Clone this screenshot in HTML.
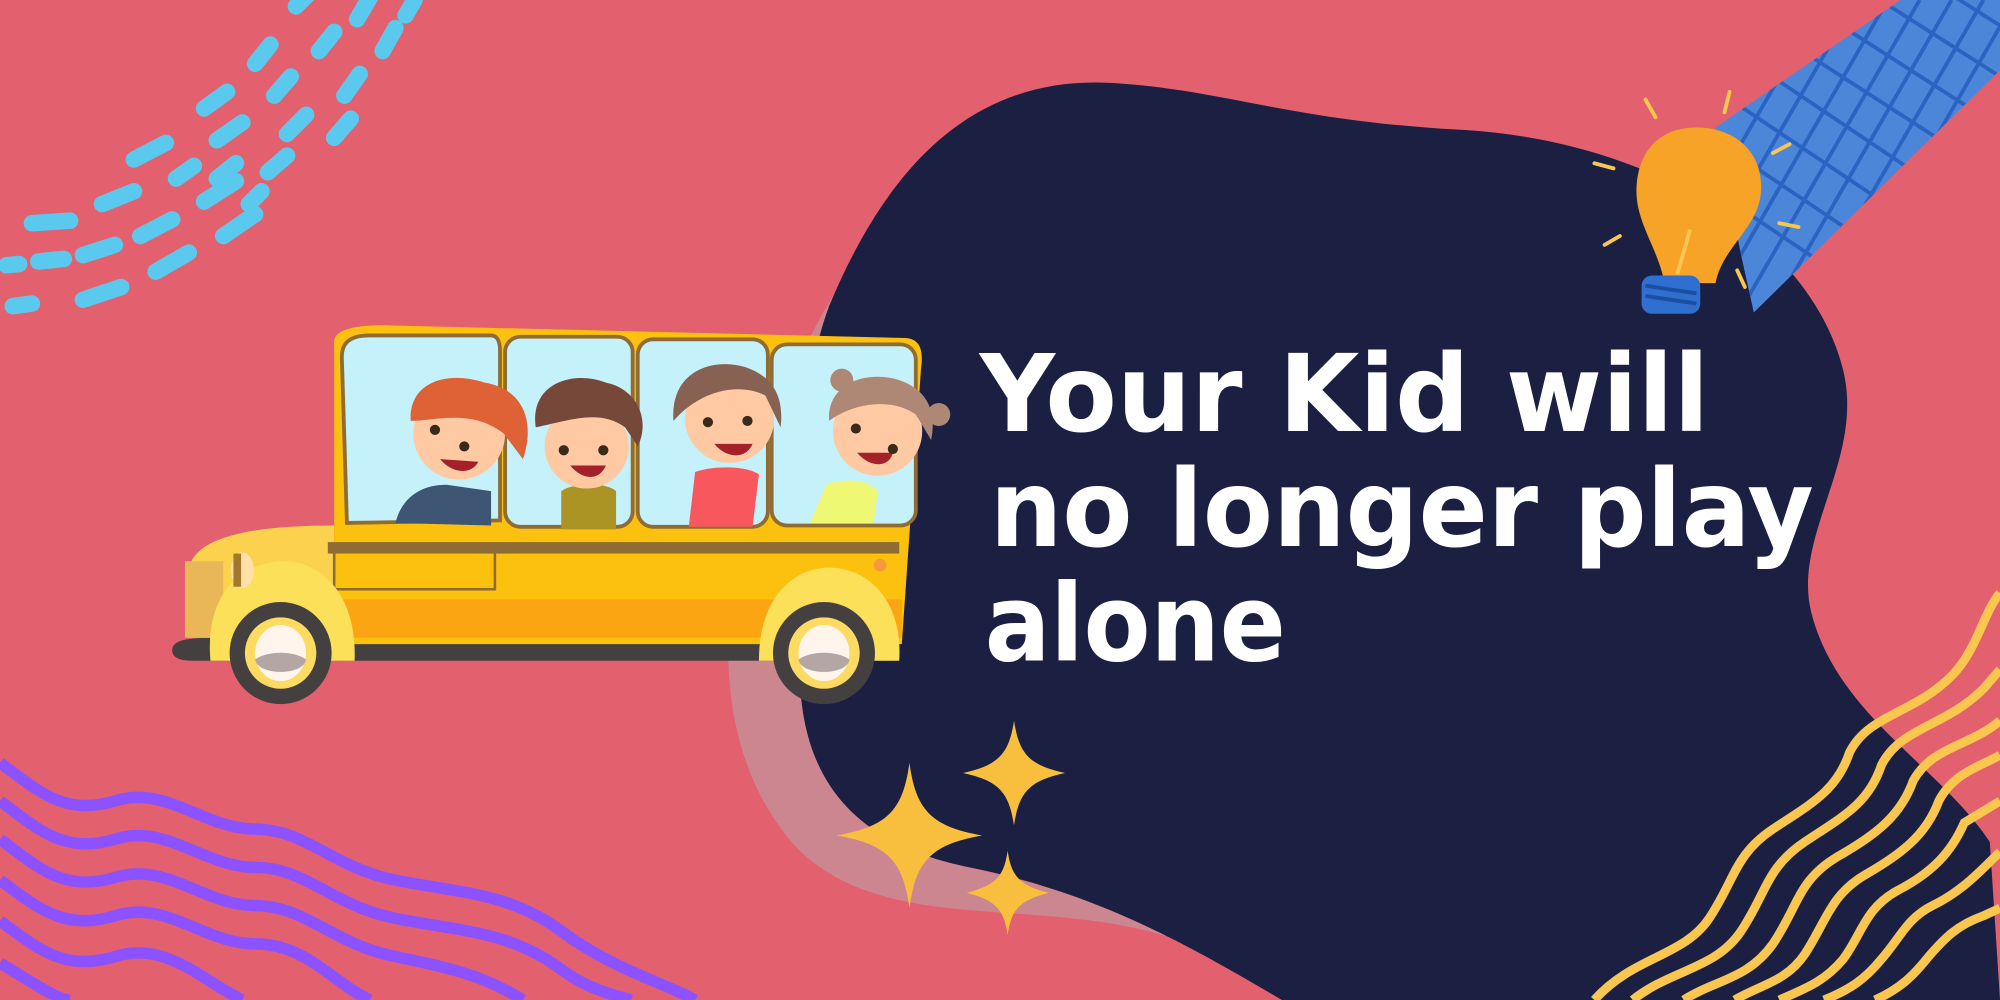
<!DOCTYPE html>
<html><head><meta charset="utf-8"><style>html,body{margin:0;padding:0;background:#E3606E;}svg{display:block}</style></head>
<body>
<svg width="2000" height="1000" viewBox="0 0 1568 784" xmlns="http://www.w3.org/2000/svg">
<rect width="1568" height="784" fill="#E3606E"/>
<!-- light blob -->
<path d="M720,150 C660,200 610,300 585,400 C560,500 565,600 625,665 C690,730 800,705 900,730 C970,748 1030,784 1060,784 L1005,784 C930,740 860,700 760,680 L800,300 Z" fill="#CC8690"/>
<!-- navy blob -->
<path d="M650,240 C700,120 770,60 870,65 C960,70 1010,95 1150,102 C1300,112 1420,190 1445,290 C1462,360 1405,420 1420,480 C1440,560 1520,600 1560,660 L1568,784 L1005,784 C930,740 860,700 760,680 C660,660 620,600 628,500 C632,430 620,320 650,240 Z" fill="#1B1F42"/>
<!-- blue dashes -->
<g stroke="#5BC8EE" stroke-width="13" stroke-linecap="round" fill="none">
<path d="M232,5 L242,-5"/><path d="M280,15 L290,-2"/><path d="M318,12 L325,0"/>
<path d="M200,50 L212,35"/><path d="M250,40 L262,25"/><path d="M300,40 L310,22"/>
<path d="M160,85 L178,72"/><path d="M215,75 L228,60"/><path d="M270,75 L282,58"/>
<path d="M105,125 L130,112"/><path d="M170,110 L190,96"/><path d="M225,105 L240,90"/><path d="M262,108 L275,93"/>
<path d="M138,140 L152,130"/><path d="M170,140 L185,128"/><path d="M210,135 L225,122"/>
<path d="M80,160 L105,150"/><path d="M160,158 L185,142"/><path d="M195,160 L205,150"/>
<path d="M25,175 L55,173"/><path d="M110,185 L135,172"/><path d="M175,185 L200,168"/>
<path d="M65,200 L90,192"/><path d="M5,208 L15,207"/><path d="M30,205 L50,203"/><path d="M122,213 L148,198"/>
<path d="M65,235 L95,225"/><path d="M10,240 L25,238"/>
</g>
<!-- purple waves -->
<g stroke="#8C52FF" stroke-width="9" fill="none">
<path d="M0,598 C30,620 50,640 90,628 C130,615 160,650 200,650 C240,650 260,680 310,690 C360,700 400,700 440,730 C480,760 520,770 545,784"/>
<path d="M0,628 C30,650 50,670 90,658 C130,645 160,680 200,680 C240,680 260,710 310,720 C360,730 400,730 440,760 C460,775 480,780 495,784"/>
<path d="M0,658 C30,680 50,700 90,688 C130,675 160,710 200,710 C240,710 260,740 310,750 C350,758 380,765 410,784"/>
<path d="M0,690 C30,712 50,730 90,718 C130,705 160,740 200,740 C240,740 260,770 290,784"/>
<path d="M0,722 C30,744 50,762 90,750 C130,737 160,770 190,784"/>
<path d="M0,755 C25,770 45,784 55,784"/>
</g>
<!-- yellow waves -->
<g stroke="#F9C74F" stroke-width="7" fill="none">
<path d="M1250,784 C1280,750 1320,750 1340,720 C1360,690 1360,670 1390,650 C1420,630 1440,620 1450,590 C1465,560 1500,560 1530,530 C1550,510 1555,480 1568,465"/>
<path d="M1280,784 C1310,760 1345,760 1365,730 C1385,700 1385,680 1415,660 C1445,640 1465,630 1475,600 C1490,570 1525,570 1555,540 L1568,525"/>
<path d="M1320,784 C1345,768 1370,768 1390,740 C1410,710 1410,690 1440,672 C1470,655 1490,640 1500,612 C1515,585 1545,585 1568,565"/>
<path d="M1360,784 C1380,772 1400,770 1415,748 C1432,722 1435,702 1462,686 C1490,670 1510,655 1520,628 C1532,605 1555,600 1568,592"/>
<path d="M1395,784 C1415,775 1430,770 1445,752 C1460,732 1462,712 1488,698 C1515,684 1530,668 1540,645 L1568,628"/>
<path d="M1430,784 C1450,776 1462,768 1475,752 C1490,735 1495,720 1515,710 C1540,698 1555,680 1568,668"/>
<path d="M1470,784 C1490,775 1500,765 1512,750 C1525,735 1535,725 1555,718 L1568,712"/>
</g>
<!-- blue tape -->
<defs><clipPath id="tape"><polygon points="1345,100 1490,0 1568,0 1568,55 1375,245 1365,200"/></clipPath></defs>
<polygon points="1345,100 1490,0 1568,0 1568,55 1375,245 1365,200" fill="#4C86D8"/>
<g clip-path="url(#tape)" stroke="#2B63C2" stroke-width="3">
<path d="M1300,40 L1568,220 M1300,0 L1568,180 M1320,-20 L1568,140 M1350,-40 L1568,100 M1380,-60 L1568,60 M1410,-80 L1568,20 M1300,80 L1568,260 M1300,120 L1568,300"/>
<path d="M1330,260 L1480,0 M1355,260 L1505,0 M1380,260 L1530,0 M1405,260 L1555,0 M1430,260 L1580,0 M1305,260 L1455,0 M1455,260 L1605,0 M1280,260 L1430,0"/>
</g>
<!-- bulb -->
<path d="M1330,100 C1365,100 1385,125 1380,155 C1376,180 1350,195 1345,222 L1305,222 C1300,195 1283,175 1283,150 C1283,120 1300,100 1330,100 Z" fill="#F7A328"/>
<path d="M1315,215 L1325,180" stroke="#F9C74F" stroke-width="3"/>
<rect x="1287" y="216" width="46" height="30" rx="8" fill="#2F6FCF"/>
<g stroke="#1D4FA0" stroke-width="3"><path d="M1290,224 L1330,230 M1290,232 L1330,238"/></g>
<g stroke="#F9C74F" stroke-width="3" stroke-linecap="round">
<path d="M1290,78 L1298,92 M1356,72 L1352,88 M1250,128 L1265,132 M1390,120 L1403,113 M1258,192 L1270,185 M1395,175 L1410,178 M1362,212 L1368,225"/>
</g>
<!-- stars -->
<g fill="#F8BE3D">
<path d="M713,598 C718,635 730,648 770,655 C730,662 718,675 713,712 C708,675 696,662 656,655 C696,648 708,635 713,598 Z"/>
<path d="M795,565 C799,592 808,600 835,606 C808,612 799,620 795,647 C791,620 782,612 755,606 C782,600 791,592 795,565 Z"/>
<path d="M790,667 C793,688 800,694 822,700 C800,706 793,712 790,733 C787,712 780,706 758,700 C780,694 787,688 790,667 Z"/>
</g>
<!-- bus -->
<g>
<path d="M135,510 C135,502 145,500 170,500 L700,500 L700,518 L150,518 C140,518 135,515 135,510 Z" fill="#454040"/>
<path d="M150,440 C160,420 200,412 262,412 L262,500 L150,500 Z" fill="#FBD24D"/>
<path d="M145,440 L175,440 L175,500 L145,500 Z" fill="#E9B758"/>
<path d="M262,268 C262,258 280,255 300,255 L710,265 C722,266 724,275 722,290 L707,505 L262,505 Z" fill="#FBC10E"/>
<rect x="262" y="470" width="445" height="30" fill="#FBA513"/>
<rect x="257" y="425" width="448" height="9" fill="#8F6C34"/>
<g fill="#C5F1FB" stroke="#8F6C34" stroke-width="3">
<path d="M268,280 C268,268 275,263 290,263 L385,263 C390,263 392,268 392,275 L392,408 L272,410 Z"/>
<rect x="396" y="264" width="100" height="149" rx="12"/>
<rect x="500" y="266" width="102" height="147" rx="12"/>
<rect x="605" y="270" width="113" height="142" rx="12"/>
</g>
<path d="M262,432 L262,462 L388,462 L388,432" fill="none" stroke="#8F6C34" stroke-width="2"/>
<!-- kids -->
<path d="M310,410 C315,390 330,380 350,380 L385,385 L385,412 Z" fill="#3F5574"/>
<circle cx="360" cy="340" r="36" fill="#FFC9A4"/>
<path d="M322,330 C320,300 350,290 380,300 C410,305 420,330 410,360 L395,340 C370,320 340,330 322,330 Z" fill="#DE6236"/>
<path d="M345,360 C355,372 370,372 375,362 Z" fill="#A52129"/>
<path d="M440,415 L440,385 C450,378 475,378 483,385 L483,415 Z" fill="#AB9324"/>
<circle cx="460" cy="350" r="33" fill="#FFC9A4"/>
<path d="M420,335 C415,300 450,290 475,300 C500,305 510,330 500,350 L490,335 C470,320 445,330 420,335 Z" fill="#76483A"/>
<path d="M447,365 C457,377 470,377 475,365 Z" fill="#A52129"/>
<path d="M540,413 L545,370 C560,365 585,365 595,372 L590,413 Z" fill="#F9575E"/>
<circle cx="572" cy="328" r="35" fill="#FFC9A4"/>
<path d="M528,330 C525,290 560,280 585,288 C605,295 615,310 612,335 L600,310 C580,300 550,305 528,330 Z" fill="#876252"/>
<path d="M560,348 C570,360 585,360 590,348 Z" fill="#A52129"/>
<path d="M635,410 L648,380 C660,375 680,375 688,385 L685,410 Z" fill="#EFF872"/>
<circle cx="688" cy="338" r="35" fill="#FFC9A4"/>
<path d="M650,330 C648,300 680,290 705,298 C725,305 735,320 730,345 L718,325 C700,312 670,315 650,330 Z" fill="#AE8874"/>
<circle cx="660" cy="298" r="9" fill="#AE8874"/><circle cx="736" cy="325" r="9" fill="#AE8874"/>
<path d="M672,355 C682,367 697,367 700,355 Z" fill="#A52129"/>
<g fill="#3A2A1A"><circle cx="341" cy="337" r="4"/><circle cx="364" cy="350" r="4"/><circle cx="442" cy="353" r="4"/><circle cx="473" cy="353" r="4"/><circle cx="555" cy="331" r="4"/><circle cx="586" cy="330" r="4"/><circle cx="671" cy="336" r="4"/><circle cx="700" cy="352" r="4"/></g>
<!-- fenders & wheels -->
<path d="M165,518 C160,460 195,440 222,440 C255,440 280,470 278,518 Z" fill="#FCE05A"/>
<path d="M595,518 C595,465 625,445 650,445 C680,445 708,470 705,518 Z" fill="#FCE05A"/>
<circle cx="220" cy="512" r="40" fill="#454040"/><circle cx="220" cy="512" r="28" fill="#FDDA62"/><ellipse cx="220" cy="512" rx="20" ry="22" fill="#FFF5EC"/><path d="M200,517 C210,510 230,510 240,517 C238,530 202,530 200,517 Z" fill="#B5A6A6"/>
<circle cx="646" cy="512" r="40" fill="#454040"/><circle cx="646" cy="512" r="28" fill="#FDDA62"/><ellipse cx="646" cy="512" rx="20" ry="22" fill="#FFF5EC"/><path d="M626,517 C636,510 656,510 666,517 C664,530 628,530 626,517 Z" fill="#B5A6A6"/>
<ellipse cx="190" cy="447" rx="9" ry="14" fill="#FFE0A8"/><rect x="183" y="434" width="6" height="26" fill="#A3772E"/>
<circle cx="690" cy="443" r="5" fill="#F49A3A"/>
</g>
<!-- text -->
<g font-family="'DejaVu Sans', 'Liberation Sans', sans-serif" font-weight="bold" font-size="84" fill="#FFFFFF">
<text x="768" y="338" textLength="572" lengthAdjust="spacingAndGlyphs">Your Kid will</text>
<text x="776" y="428" textLength="646" lengthAdjust="spacingAndGlyphs">no longer play</text>
<text x="772" y="518" textLength="236" lengthAdjust="spacingAndGlyphs">alone</text>
</g>
</svg>
</body></html>
